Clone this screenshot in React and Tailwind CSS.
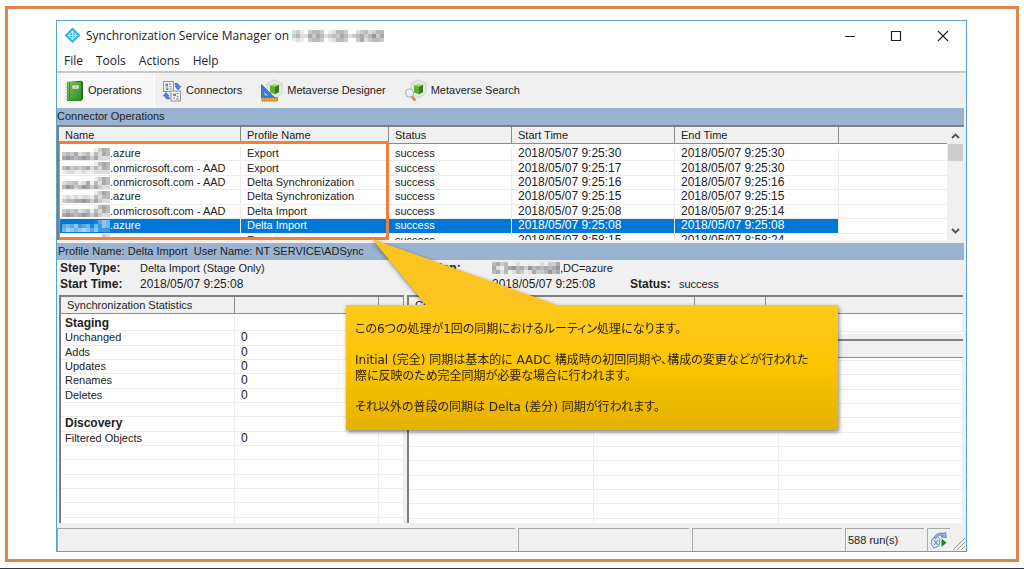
import React from "react";

/* Each digit is the darkness of one mosaic cell, 0 is empty. */
const NAME_PATTERNS = [
  ["000000001354", "343523414254", "565456535222"],
  ["000000001454", "453434524254", "122112112222"],
  ["000000001354", "233412514254", "465346535322"],
  ["000000001354", "121212214244", "344556535322"],
  ["000000001454", "343423414254", "565456535322"],
  ["000000001354", "343523414254", "465456535222"],
  ["000000000032", "101000001343", "010110011232"],
];
const TITLE_PATTERN = [
  "23103443012443002342344",
  "34225354234354234534635",
  "12103443012443003523443",
];
const DOMAIN_PATTERN = ["45340020010020335", "52145645364545456", "45241243125334645"];

const GRAYS = ["none", "#ececec", "#dddddd", "#cbcbcb", "#bababa", "#a9a9a9", "#989898"];
const BLUES = ["none", "#1a83dc", "#3d97e2", "#5aa6e6", "#74b5ea", "#92c5ef", "#aed4f3"];

function Mosaic({ pattern, blue = false, className = "" }) {
  const palette = blue ? BLUES : GRAYS;
  const cols = pattern[0].length;
  return (
    <svg
      aria-hidden="true"
      width={cols * 4}
      height={pattern.length * 4}
      className={`inline-block shrink-0 align-top ${className}`}
    >
      {pattern.map((row, y) =>
        [...row].map((digit, x) => (
          <rect key={`${x}-${y}`} x={x * 4} y={y * 4} width="4" height="4" fill={palette[Number(digit)]} />
        ))
      )}
    </svg>
  );
}

function AppIcon() {
  return (
    <svg aria-hidden="true" width="17" height="17" viewBox="0 0 17 17">
      <path d="M8.5 .5 16.5 8.5 8.5 16 .5 8.5Z" fill="#27b8ec" />
      <path d="M8.5 3.400 13.4 8.5 8.5 13 3.600 8.5Z" fill="#bdecfb" />
      <path d="M8.5 5 11.900 8.5 8.5 11.600 5.100 8.5Z" fill="#1fb4ea" />
      <path d="M8.5 3.500v9.500M4 8.5h9" stroke="#e8faff" strokeWidth=".7" />
      <circle cx="8.5" cy="8.5" r="1.1" fill="#fff" />
    </svg>
  );
}

function BookIcon() {
  return (
    <svg aria-hidden="true" width="19" height="22" viewBox="0 0 19 22">
      <defs>
        <linearGradient id="book" x1="0" y1="0" x2="1" y2="1">
          <stop offset="0" stopColor="#7cc254" />
          <stop offset="1" stopColor="#2f8a26" />
        </linearGradient>
      </defs>
      <path d="M2 2 16 .8 18 2v17l-2 2H2Z" fill="#2c6d20" />
      <path d="M2.5 2H16v18.5H2.5Z" fill="url(#book)" />
      <path d="M4.5 2v18.5" stroke="#3b8a2a" strokeWidth=".8" />
      <rect x="7" y="5" width="7" height="4" fill="#eaf6dc" stroke="#4b8c35" strokeWidth=".6" />
      <path d="M8.5 7h4" stroke="#7fb367" strokeWidth=".8" />
      <path d="M.5 4h3M.5 7h3M.5 10h3M.5 13h3M.5 16h3M.5 19h3" stroke="#a5b39b" strokeWidth="1.1" />
    </svg>
  );
}

function ConnectorsIcon() {
  return (
    <svg aria-hidden="true" width="20" height="22" viewBox="0 0 20 22">
      <rect x="1.5" y="1.5" width="10" height="10" fill="#eef0f4" stroke="#8a93a2" />
      <rect x="9" y="11" width="9.5" height="10" fill="#eef0f4" stroke="#8a93a2" />
      <path
        d="M4 4h1.5v2H4zM7 4h2M7.5 6 9 7.500M4 8h2v1.500H4M8 9h1.500M11.500 14h2v1.500h-2zM15 13.500h1.500M15 16l1.500 1M11.500 18h1.500M14.500 19h2"
        fill="none"
        stroke="#5d6675"
        strokeWidth=".9"
      />
      <path d="M13 3.500c2.500-.5 4 .5 4 2.700h2L16 10l-3-3.800h1.700c0-1-.6-1.400-1.700-1.300Z" fill="#4f86e8" stroke="#2456bd" strokeWidth=".6" />
      <path d="M7.500 18.800c-3 .6-4.300-.6-4.300-2.800h-2L4 12.500 7 16H5.400c0 1 .7 1.400 2.100 1.200Z" fill="#4f86e8" stroke="#2456bd" strokeWidth=".6" />
    </svg>
  );
}

function Cube() {
  return (
    <g>
      <path d="M14 .8 22 4.500v10L14.500 19 7 14.500v-10Z" fill="#e6eae6" stroke="#c2c9c2" strokeWidth=".8" />
      <path d="M7 4.500 14.500 8 22 4.500M14.500 8v11" fill="none" stroke="#cdd4cd" strokeWidth=".7" />
      <path d="M10 6.200 14 4.800l5 1-4 2Z" fill="#a5dc6c" />
      <path d="M10 6.200 15 7.800v7.500L10 13.500Z" fill="#5fb02f" />
      <path d="M15 7.800 19 5.800v7.500l-4 2Z" fill="#34801b" />
    </g>
  );
}

function DesignerIcon() {
  return (
    <svg aria-hidden="true" width="24" height="23" viewBox="0 0 24 23">
      <Cube />
      <path d="M1.500 5.500 15 19H1.500Z" fill="#3f78dc" stroke="#2353ad" strokeWidth=".7" />
      <path d="M4.500 13 8 16.500H4.500Z" fill="#a8c6f5" />
      <path d="M2 18.500h15.500V22H2Z" fill="#efb340" stroke="#8f601b" strokeWidth=".7" />
      <path d="M4.500 19v1.500M7 19v1.500M9.500 19v1.500M12 19v1.500M14.500 19v1.500" stroke="#7a4e12" strokeWidth=".6" />
    </svg>
  );
}

function SearchIcon() {
  return (
    <svg aria-hidden="true" width="24" height="23" viewBox="0 0 24 23">
      <Cube />
      <path d="m8 17.500 2.500 3.200" stroke="#d88a35" strokeWidth="2.800" strokeLinecap="round" />
      <circle cx="5.500" cy="14" r="4" fill="#e6f1fc" stroke="#a3b0c0" strokeWidth="1.100" />
      <path d="M3.300 13.300c.4-1.300 1.500-1.900 2.700-1.700" stroke="#fff" fill="none" />
    </svg>
  );
}

function RunIcon() {
  return (
    <svg aria-hidden="true" width="18" height="18" viewBox="0 0 18 18">
      <path d="M2 8 7 5l3 3-1 7-5 2-3-4Z" fill="#d9e6f6" stroke="#5e87b8" strokeWidth=".9" />
      <path d="M4 6.500C6 3 10 1 14 2.500l1.500-1.500.8 5.500-5.300-.5 1.500-1.500C9.500 3.500 7 5 6 7.500Z" fill="#8eb6e8" stroke="#3a6cb0" strokeWidth=".7" />
      <path d="m4 9 4 5M8 9l-4 5" stroke="#44689a" strokeWidth=".8" />
      <path d="M10.500 7h6v9h-6Z" fill="#eef6ea" />
      <path d="m11.500 7.500 5 4.300-5 4.200Z" fill="#118a1c" />
    </svg>
  );
}

const MENUS = ["File", "Tools", "Actions", "Help"];

const RUNS = [
  [".azure", "Export", "success", "2018/05/07 9:25:30", "2018/05/07 9:25:30"],
  [".onmicrosoft.com - AAD", "Export", "success", "2018/05/07 9:25:17", "2018/05/07 9:25:30"],
  [".onmicrosoft.com - AAD", "Delta Synchronization", "success", "2018/05/07 9:25:16", "2018/05/07 9:25:16"],
  [".azure", "Delta Synchronization", "success", "2018/05/07 9:25:15", "2018/05/07 9:25:15"],
  [".onmicrosoft.com - AAD", "Delta Import", "success", "2018/05/07 9:25:08", "2018/05/07 9:25:14"],
  [".azure", "Delta Import", "success", "2018/05/07 9:25:08", "2018/05/07 9:25:08"],
  ["", "Export", "success", "2018/05/07 8:58:15", "2018/05/07 8:58:24"],
];

const STATS = [
  ["Staging", null],
  ["Unchanged", "0"],
  ["Adds", "0"],
  ["Updates", "0"],
  ["Renames", "0"],
  ["Deletes", "0"],
  ["", null],
  ["Discovery", null],
  ["Filtered Objects", "0"],
  ["", null],
  ["", null],
  ["", null],
  ["", null],
  ["", null],
  ["", null],
];

const TH = "h-[17px] border-r border-b border-[#8c8c8c] bg-[#f0f0f0] p-0 pl-[6px] text-left font-normal leading-[15px]";
const TD = "border-r border-b border-[#ededed] p-0 leading-[13px] whitespace-nowrap";

function RunsList() {
  return (
    <div className="relative flex h-[115px] overflow-hidden border-t-2 border-l-2 border-[#808080] bg-white">
      <div className="min-w-0 flex-1">
        <table className="h-[121px] w-full table-fixed border-separate border-spacing-0">
          <colgroup>
            <col className="w-[182px]" />
            <col className="w-[148px]" />
            <col className="w-[123px]" />
            <col className="w-[163px]" />
            <col className="w-[164px]" />
            <col />
          </colgroup>
          <thead>
            <tr className="h-[17px]">
              {["Name", "Profile Name", "Status", "Start Time", "End Time"].map((h) => (
                <th key={h} scope="col" className={TH}>{h}</th>
              ))}
              <td className="h-[17px] border-b border-[#8c8c8c] bg-[#f0f0f0] p-0" />
            </tr>
            <tr className="h-[3px]"><td colSpan={6} className="h-[3px] p-0" /></tr>
          </thead>
          <tbody>
            {RUNS.map((run, i) => {
              const cell = i === 5 ? `${TD} bg-[#0078d7] text-white` : TD;
              return (
                <tr key={i}>
                  <td className={`${cell} pl-[3px]`}>
                    <span className="flex h-[13px] items-center overflow-hidden">
                      <Mosaic pattern={NAME_PATTERNS[i]} blue={i === 5} />
                      {run[0]}
                    </span>
                  </td>
                  <td className={`${cell} pl-[6px]`}>{run[1]}</td>
                  <td className={`${cell} pl-[6px]`}>{run[2]}</td>
                  <td className={`${cell} pl-[6px] text-xs leading-[13px]`}>{run[3]}</td>
                  <td className={`${cell} pl-[6px] text-xs leading-[13px]`}>{run[4]}</td>
                  <td className="border-b border-[#ededed] p-0" />
                </tr>
              );
            })}
          </tbody>
        </table>
      </div>
      <div className="flex w-[17px] shrink-0 flex-col bg-[#f0f0f0]">
        <button type="button" aria-label="Scroll up" className="flex h-[17px] items-center justify-center">
          <svg width="9" height="6" viewBox="0 0 9 6"><path d="M1 5 4.500 1.500 8 5" fill="none" stroke="#505050" strokeWidth="1.800" /></svg>
        </button>
        <div className="mx-px h-[17px] bg-[#cdcdcd]" />
        <button type="button" aria-label="Scroll down" className="mt-auto mb-px flex h-[17px] items-center justify-center">
          <svg width="9" height="6" viewBox="0 0 9 6"><path d="M1 1 4.500 4.500 8 1" fill="none" stroke="#505050" strokeWidth="1.800" /></svg>
        </button>
      </div>
      <div className="pointer-events-none absolute -left-[2px] top-[14px] h-[99px] w-[332px] border-[3px] border-[#f47f3c]" />
    </div>
  );
}

function StatsList() {
  return (
    <div className="h-[228px] w-[345px] shrink-0 overflow-hidden border-t-2 border-l-2 border-[#808080] bg-white">
      <table className="h-[235px] w-full table-fixed border-separate border-spacing-0">
        <colgroup>
          <col className="w-[174px]" />
          <col className="w-[144px]" />
          <col />
        </colgroup>
        <thead>
          <tr className="h-[17px]">
            <th scope="col" className={TH}>Synchronization Statistics</th>
            <td className={TH} />
            <td className={TH} />
          </tr>
          <tr className="h-[3px]"><td colSpan={3} className="h-[3px] p-0" /></tr>
        </thead>
        <tbody>
          {STATS.map(([label, value], i) => (
            <tr key={i}>
              <td className={`${TD} pl-[4px]`}>
                {label && value === null ? <b className="text-xs leading-[13px]">{label}</b> : label || "\u00a0"}
              </td>
              <td className={`${TD} pl-[6px] text-xs leading-[13px]`}>{value}</td>
              <td className={TD} />
            </tr>
          ))}
        </tbody>
      </table>
    </div>
  );
}

function ErrorLists() {
  return (
    <div className="flex h-[228px] min-w-0 flex-1 flex-col gap-[5px]">
      <div className="h-[39px] overflow-hidden border-t-2 border-l-2 border-[#808080] bg-white">
        <table className="w-full table-fixed border-separate border-spacing-0">
          <colgroup>
            <col className="w-[286px]" />
            <col className="w-[71px]" />
            <col />
          </colgroup>
          <thead>
            <tr>
              <th scope="col" className={TH}>Connection Status</th>
              <td className={TH} />
              <td className="border-b border-[#8c8c8c] bg-[#f0f0f0] p-0" />
            </tr>
          </thead>
          <tbody>
            <tr className="h-[18px]"><td className={TD} /><td className={TD} /><td className={TD} /></tr>
          </tbody>
        </table>
      </div>
      <div className="min-h-0 flex-1 overflow-hidden border-t-2 border-l-2 border-[#808080] bg-white">
        <table className="h-[192px] w-full table-fixed border-separate border-spacing-0">
          <colgroup>
            <col className="w-[185px]" />
            <col className="w-[185px]" />
            <col />
          </colgroup>
          <thead>
            <tr className="h-[17px]"><td colSpan={3} className="h-[17px] border-b border-[#8c8c8c] bg-[#f0f0f0] p-0" /></tr>
            <tr className="h-[3px]"><td colSpan={3} className="h-[3px] border-b border-[#ededed] p-0" /></tr>
          </thead>
          <tbody>
            {Array.from({ length: 12 }, (_, i) => (
              <tr key={i}><td className={TD}>&nbsp;</td><td className={TD} /><td className={TD} /></tr>
            ))}
          </tbody>
        </table>
      </div>
    </div>
  );
}

function Callout() {
  return (
    <aside className="absolute left-[289px] top-[218px] w-[492px] drop-shadow-[1px_2px_2px_rgba(0,0,0,0.5)]">
      <svg aria-hidden="true" width="220" height="66" viewBox="0 0 220 66" className="block">
        <path d="M26 0 80 66H211Z" fill="#fdc420" />
      </svg>
      <div
        lang="ja"
        className="flex h-[125px] flex-col gap-[15px] whitespace-nowrap bg-linear-to-b from-[#ffc91a] via-[#fbc400] to-[#e3b200] px-[9px] pt-[16px] font-['DejaVu_Sans','Noto_Sans_CJK_JP',sans-serif] text-xs leading-[16px] text-[#2b2108] [font-feature-settings:'palt']"
      >
        <p>この6つの処理が1回の同期におけるルーティン処理になります。</p>
        <p>
          Initial (完全) 同期は基本的に AADC 構成時の初回同期や、構成の変更などが行われた
          <br />
          際に反映のため完全同期が必要な場合に行われます。
        </p>
        <p>それ以外の普段の同期は Delta (差分) 同期が行われます。</p>
      </div>
    </aside>
  );
}

export default function App() {
  return (
    <div className="flex min-h-screen flex-col border-b border-[#33343f] bg-white pt-[6px] pr-[5px] pb-[6px] pl-[5px] font-['Liberation_Sans',Arial,sans-serif] text-[11px] text-[#222]">
      <main className="flex-1 border-[3px] border-[#e0834a] pt-[11px] pr-[49px] pb-[7px] pl-[48px]">
        <section className="relative border border-[#5b9fcb] bg-[#f0f0f0]">
          <header className="flex h-[29px] items-center bg-white pl-[7px] font-['Open_Sans','Noto_Sans',sans-serif] text-xs leading-4">
            <AppIcon />
            <h1 className="ml-[5px]">Synchronization Service Manager on</h1>
            <Mosaic pattern={TITLE_PATTERN} className="ml-[3px]" />
            <div className="ml-auto flex h-full text-[#222]">
              <button type="button" aria-label="Minimize" className="flex w-[47px] items-center justify-center">
                <svg width="12" height="12"><path d="M1 6.500h10" stroke="currentColor" /></svg>
              </button>
              <button type="button" aria-label="Maximize" className="flex w-[46px] items-center justify-center">
                <svg width="12" height="12"><path d="M1.500 1.500h9v9h-9z" fill="none" stroke="currentColor" strokeWidth="1.200" /></svg>
              </button>
              <button type="button" aria-label="Close" className="flex w-[47px] items-center justify-center">
                <svg width="12" height="12"><path d="m1 1 10 10M11 1 1 11" stroke="currentColor" strokeWidth="1.200" /></svg>
              </button>
            </div>
          </header>
          <nav className="flex h-[21px] items-center gap-[13px] bg-white pl-[7px] font-['Open_Sans','Noto_Sans',sans-serif] text-xs leading-4">
            {MENUS.map((m) => <button key={m} type="button">{m}</button>)}
          </nav>
          <div className="flex h-[37px] items-stretch border-t-2 border-[#c6c6c6]">
            <button type="button" aria-pressed="true" className="flex w-[98px] items-center gap-[4px] border-r border-[#fff] bg-[#f7f7f7] pl-[8px]">
              <BookIcon />Operations
            </button>
            <button type="button" className="flex items-center gap-[4px] pl-[7px]">
              <ConnectorsIcon />Connectors
            </button>
            <button type="button" className="flex items-center gap-[3px] pl-[18px]">
              <DesignerIcon />Metaverse Designer
            </button>
            <button type="button" className="flex items-center gap-[3px] pl-[18px]">
              <SearchIcon />Metaverse Search
            </button>
          </div>
          <h2 className="mr-[2px] h-[17px] bg-[#9ab3d1] leading-[17px]">Connector Operations</h2>
          <div className="mr-[2px]"><RunsList /></div>
          <h2 className="mt-[3px] mr-[2px] h-[17px] bg-[#9ab3d1] pl-px leading-[17px] whitespace-pre">{"Profile Name: Delta Import  User Name: NT SERVICE\\ADSync"}</h2>
          <dl className="grid h-[35px] grid-cols-[80px_268px_84px_138px_49px_1fr] content-start pl-[3px] leading-[16px]">
            <dt className="text-xs leading-[16px] font-bold">Step Type:</dt>
            <dd>Delta Import (Stage Only)</dd>
            <dt className="text-xs leading-[16px] font-bold">Partition:</dt>
            <dd className="col-span-3 flex items-center"><Mosaic pattern={DOMAIN_PATTERN} />,DC=azure</dd>
            <dt className="text-xs leading-[16px] font-bold">Start Time:</dt>
            <dd className="text-xs leading-[16px]">2018/05/07 9:25:08</dd>
            <dd className="col-start-4 text-xs leading-[16px]">2018/05/07 9:25:08</dd>
            <dt className="text-xs leading-[16px] font-bold">Status:</dt>
            <dd>success</dd>
          </dl>
          <div className="flex gap-[3px] pr-[3px] pl-[2px]">
            <StatsList />
            <ErrorLists />
          </div>
          <footer className="mt-[5px] flex h-[23px] gap-[3px] leading-[23px]">
            <div className="flex-1 border-t border-l border-[#a8a8a8]" />
            <div className="w-[171px] border-t border-l border-[#a8a8a8]" />
            <div className="w-[150px] border-t border-l border-[#a8a8a8]" />
            <div className="w-[79px] border-t border-l border-[#a8a8a8] pl-[2px]">588 run(s)</div>
            <div className="flex w-[23px] items-center justify-center border-t border-l border-[#a8a8a8]"><RunIcon /></div>
            <svg aria-hidden="true" width="13" height="14" className="self-end">
              <path d="M0 13 12 1M4 13l8-8M8 13l4-4" stroke="#999" />
            </svg>
          </footer>
          <Callout />
        </section>
      </main>
    </div>
  );
}
